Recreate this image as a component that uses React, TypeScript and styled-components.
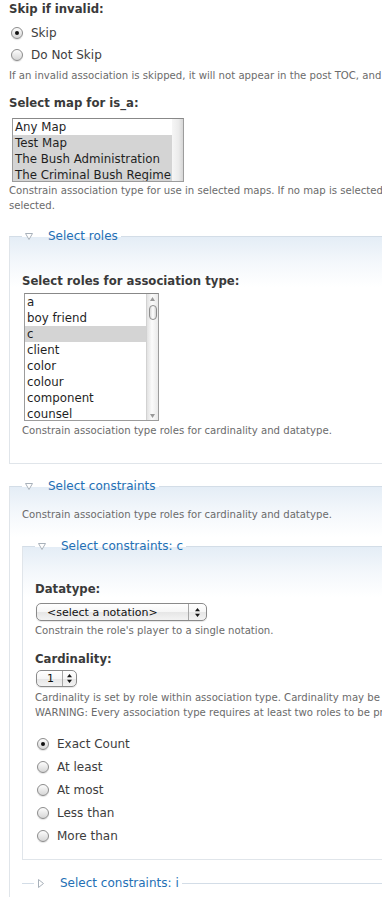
import styled, { createGlobalStyle } from 'styled-components';

const GlobalStyle = createGlobalStyle`
  html, body {
    margin: 0;
    padding: 0;
    overflow: hidden;
    background: #ffffff;
  }
  body {
    font-family: "DejaVu Sans", Verdana, sans-serif;
    color: #494949;
  }
`;

const Page = styled.div`
  width: 600px;
  padding: 1px 0 0 9px;
`;

const Label = styled.div<{ $top?: number }>`
  margin-top: ${(p) => p.$top ?? 0}px;
  font-size: 11.7px;
  font-weight: bold;
  line-height: 16px;
  color: #3a3a3a;
  white-space: nowrap;
`;

const Description = styled.div<{ $top?: number; $lh?: number }>`
  margin-top: ${(p) => p.$top ?? 0}px;
  font-size: 10.15px;
  line-height: ${(p) => p.$lh ?? 14}px;
  color: #6b6b6b;
  white-space: nowrap;
`;

const RadioList = styled.div<{ $top: number }>`
  margin-top: ${(p) => p.$top}px;
  padding-left: 2px;
  display: flex;
  flex-direction: column;
`;

const RadioRow = styled.label<{ $h: number }>`
  display: flex;
  align-items: center;
  gap: 8px;
  height: ${(p) => p.$h}px;
  font-size: 12px;
  color: #3d3d3d;
`;

const RadioDot = styled.span<{ $checked?: boolean }>`
  width: 12px;
  height: 12px;
  box-sizing: border-box;
  border-radius: 50%;
  border: 1px solid #8c8c8c;
  background: linear-gradient(#fdfdfd, #e9e9e9 50%, #d6d6d6);
  box-shadow: 0 1px 1px rgba(0, 0, 0, 0.12);
  display: flex;
  align-items: center;
  justify-content: center;

  &::after {
    content: '';
    display: ${(p) => (p.$checked ? 'block' : 'none')};
    width: 4px;
    height: 4px;
    border-radius: 50%;
    background: #111;
  }
`;

const ListBox = styled.div<{ $top: number; $left: number; $w: number; $h: number }>`
  margin: ${(p) => p.$top}px 0 0 ${(p) => p.$left}px;
  width: ${(p) => p.$w}px;
  height: ${(p) => p.$h}px;
  box-sizing: border-box;
  border: 1px solid #9c9c9c;
  border-top-color: #888888;
  background: #ffffff;
  display: flex;
  overflow: hidden;
`;

const Options = styled.div`
  flex: 1;
  min-width: 0;
`;

const Option = styled.div<{ $selected?: boolean }>`
  height: 16px;
  line-height: 16px;
  padding-left: 2px;
  font-size: 11.8px;
  color: #1f1f1f;
  white-space: nowrap;
  background: ${(p) => (p.$selected ? '#d4d4d4' : 'transparent')};
`;

const ListEdge = styled.div`
  width: 11px;
  background: linear-gradient(to right, #f6f6f6, #ebebeb 60%, #d6d6d6);
`;

const ScrollTrack = styled.div`
  width: 12px;
  border-left: 1px solid #d2d2d2;
  background: linear-gradient(to right, #e2e2e2, #fbfbfb 45%, #e9e9e9);
  display: flex;
  flex-direction: column;
  align-items: center;
  padding: 3px 0 2px;
  box-sizing: border-box;
`;

const ScrollThumb = styled.div`
  margin-top: 4px;
  width: 8px;
  height: 15px;
  box-sizing: border-box;
  border: 1px solid #8e8e8e;
  border-radius: 5px;
  background: linear-gradient(to right, #d8d8d8, #ffffff 50%, #d4d4d4);
`;

const ScrollGap = styled.div`
  flex: 1;
`;

const Fieldset = styled.fieldset<{ $top: number; $pt: number; $pb: number }>`
  margin: ${(p) => p.$top}px 0 0;
  padding: ${(p) => p.$pt}px 0 ${(p) => p.$pb}px 12px;
  min-width: 0;
  border: 1px solid #e0e5ea;
  border-top-color: #d3dde7;
  background: linear-gradient(to bottom, #e4edf6, #f3f7fb 24px, #ffffff 50px);
`;

const CollapsedFieldset = styled.fieldset<{ $top: number }>`
  margin: ${(p) => p.$top}px 0 0;
  padding: 0 0 0 12px;
  min-width: 0;
  border: 0;
  border-top: 1px solid #d3dde7;
  background: none;
`;

const Legend = styled.legend`
  display: block;
  height: 16px;
  padding: 0 3px;
  line-height: 16px;
`;

const LegendLink = styled.span`
  display: flex;
  align-items: center;
  gap: 15px;
  height: 16px;
  font-size: 12px;
  color: #2470b5;
  white-space: nowrap;
`;

const Popup = styled.div<{ $top: number; $w: number; $h: number }>`
  margin: ${(p) => p.$top}px 0 0 1px;
  width: ${(p) => p.$w}px;
  height: ${(p) => p.$h}px;
  box-sizing: border-box;
  border: 1px solid #8a8a8a;
  border-radius: 5px;
  background: linear-gradient(#ffffff, #f6f6f6 50%, #e6e6e6 52%, #f3f3f3);
  box-shadow: 0 1px 1px rgba(0, 0, 0, 0.1);
  display: flex;
  align-items: center;
  font-size: 11px;
  color: #111111;
`;

const PopupText = styled.span`
  flex: 1;
  padding-left: 10px;
  white-space: nowrap;
`;

const PopupArrows = styled.span<{ $w: number }>`
  width: ${(p) => p.$w}px;
  height: 100%;
  border-left: 1px solid #a6a6a6;
  display: flex;
  align-items: center;
  justify-content: center;
`;

function ExpandedIcon() {
  return (
    <svg width="8" height="7" viewBox="0 0 8 7">
      <path d="M0.5 0.5 H7.5 L4 6.5 Z" fill="#fff" stroke="#a8b1ba" />
    </svg>
  );
}

function CollapsedIcon() {
  return (
    <svg width="8" height="9" viewBox="0 0 8 9">
      <path d="M1.5 0.5 L6.5 4.5 L1.5 8.5 Z" fill="#fff" stroke="#a8b1ba" />
    </svg>
  );
}

function UpDown() {
  return (
    <svg width="5" height="9" viewBox="0 0 5 9">
      <path d="M2.5 0 L5 3.3 H0 Z M2.5 9 L5 5.7 H0 Z" fill="#151515" />
    </svg>
  );
}

function ScrollArrow({ down }: { down?: boolean }) {
  return (
    <svg width="5" height="4" viewBox="0 0 5 4">
      <path d={down ? 'M0 0 H5 L2.5 4 Z' : 'M2.5 0 L5 4 H0 Z'} fill="#9a9a9a" />
    </svg>
  );
}

const maps = [
  { name: 'Any Map', selected: false },
  { name: 'Test Map', selected: true },
  { name: 'The Bush Administration', selected: true },
  { name: 'The Criminal Bush Regime', selected: true },
];

const roles = ['a', 'boy friend', 'c', 'client', 'color', 'colour', 'component', 'counsel'];

const counts = ['Exact Count', 'At least', 'At most', 'Less than', 'More than'];

export default function App() {
  return (
    <>
      <GlobalStyle />
      <Page>
        <Label>Skip if invalid:</Label>
        <RadioList $top={5}>
          <RadioRow $h={22}>
            <RadioDot $checked />
            Skip
          </RadioRow>
          <RadioRow $h={22}>
            <RadioDot />
            Do Not Skip
          </RadioRow>
        </RadioList>
        <Description $top={3}>
          If an invalid association is skipped, it will not appear in the post TOC, and
        </Description>

        <Label $top={12}>Select map for is_a:</Label>
        <ListBox $top={7} $left={3} $w={172} $h={64}>
          <Options>
            {maps.map((m) => (
              <Option key={m.name} $selected={m.selected}>
                {m.name}
              </Option>
            ))}
          </Options>
          <ListEdge />
        </ListBox>
        <Description $top={1} $lh={15}>
          Constrain association type for use in selected maps. If no map is selected
          <br />
          selected.
        </Description>

        <Fieldset $top={15} $pt={29} $pb={25}>
          <Legend>
            <LegendLink>
              <ExpandedIcon />
              Select roles
            </LegendLink>
          </Legend>
          <Label>Select roles for association type:</Label>
          <ListBox $top={4} $left={2} $w={135} $h={128}>
            <Options>
              {roles.map((r) => (
                <Option key={r} $selected={r === 'c'}>
                  {r}
                </Option>
              ))}
            </Options>
            <ScrollTrack>
              <ScrollArrow />
              <ScrollThumb />
              <ScrollGap />
              <ScrollArrow down />
            </ScrollTrack>
          </ListBox>
          <Description $top={3}>
            Constrain association type roles for cardinality and datatype.
          </Description>
        </Fieldset>

        <Fieldset $top={14} $pt={14} $pb={20}>
          <Legend>
            <LegendLink>
              <ExpandedIcon />
              Select constraints
            </LegendLink>
          </Legend>
          <Description>Constrain association type roles for cardinality and datatype.</Description>

          <Fieldset $top={16} $pt={27} $pb={12}>
            <Legend>
              <LegendLink>
                <ExpandedIcon />
                Select constraints: c
              </LegendLink>
            </Legend>
            <Label>Datatype:</Label>
            <Popup $top={6} $w={171} $h={18}>
              <PopupText>&lt;select a notation&gt;</PopupText>
              <PopupArrows $w={17}>
                <UpDown />
              </PopupArrows>
            </Popup>
            <Description $top={3}>Constrain the role's player to a single notation.</Description>

            <Label $top={13}>Cardinality:</Label>
            <Popup $top={3} $w={41} $h={17}>
              <PopupText>1</PopupText>
              <PopupArrows $w={13}>
                <UpDown />
              </PopupArrows>
            </Popup>
            <Description $top={3} $lh={15}>
              Cardinality is set by role within association type. Cardinality may be
              <br />
              WARNING: Every association type requires at least two roles to be present.
            </Description>

            <RadioList $top={12}>
              {counts.map((c, i) => (
                <RadioRow key={c} $h={23}>
                  <RadioDot $checked={i === 0} />
                  {c}
                </RadioRow>
              ))}
            </RadioList>
          </Fieldset>

          <CollapsedFieldset $top={15}>
            <Legend>
              <LegendLink>
                <CollapsedIcon />
                Select constraints: i
              </LegendLink>
            </Legend>
          </CollapsedFieldset>
        </Fieldset>
      </Page>
    </>
  );
}
